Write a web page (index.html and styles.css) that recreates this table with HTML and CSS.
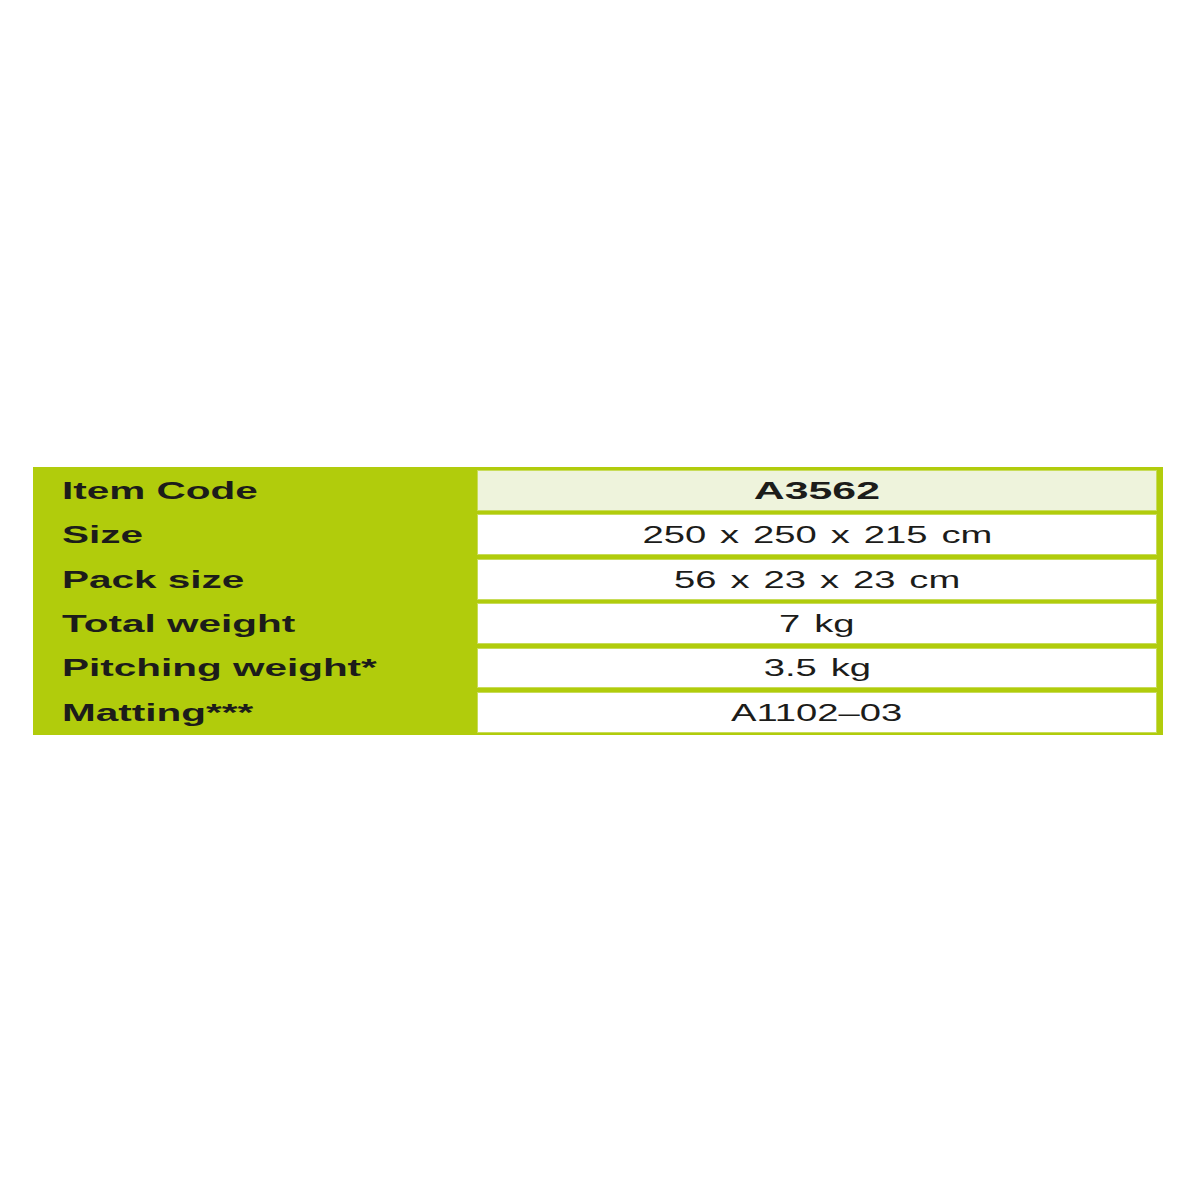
FILE: index.html
```html
<!DOCTYPE html>
<html lang="en">
<head>
<meta charset="utf-8">
<title>Specifications</title>
<link rel="stylesheet" href="styles.css">
</head>
<body>
<main class="page">
  <div class="spec">
    <div class="label"><span class="lt">Item Code</span></div>
    <div class="value head"><span class="vt bold">A3562</span></div>
    <div class="label"><span class="lt">Size</span></div>
    <div class="value"><span class="vt">250 x 250 x 215 cm</span></div>
    <div class="label"><span class="lt">Pack size</span></div>
    <div class="value"><span class="vt">56 x 23 x 23 cm</span></div>
    <div class="label"><span class="lt">Total weight</span></div>
    <div class="value"><span class="vt">7 kg</span></div>
    <div class="label"><span class="lt">Pitching weight*</span></div>
    <div class="value"><span class="vt">3.5 kg</span></div>
    <div class="label"><span class="lt">Matting***</span></div>
    <div class="value"><span class="vt">A1102–03</span></div>
  </div>
</main>
</body>
</html>
```
FILE: styles.css
```css
html, body {
  margin: 0;
  padding: 0;
  background: #ffffff;
}
.page {
  padding: 467px 0 0 33px;
}
.spec {
  width: 1124px;
  display: grid;
  grid-template-columns: 444px 680px;
  grid-auto-rows: 40.8px;
  row-gap: 3.6px;
  padding: 3px 6px 2px 0;
  background: #b1cc0c;
  font-family: "Liberation Sans", Arial, sans-serif;
  color: #1c1c1a;
}
.label {
  display: flex;
  align-items: center;
  padding: 2px 0 0 29px;
}
.lt {
  display: inline-block;
  font-size: 23px;
  font-weight: 700;
  transform: scaleX(1.76);
  transform-origin: left center;
  white-space: nowrap;
}
.value {
  display: flex;
  align-items: center;
  justify-content: center;
  padding-top: 2px;
  background: #ffffff;
  box-shadow: inset 0 0 0 1px #c8dc5a;
}
.value.head {
  background: #eef3dc;
}
.vt {
  display: inline-block;
  font-size: 23px;
  transform: scaleX(1.66);
  transform-origin: center center;
  white-space: nowrap;
  word-spacing: 2px;
}
.vt.bold {
  font-weight: 700;
  transform: scaleX(1.86);
}
```
